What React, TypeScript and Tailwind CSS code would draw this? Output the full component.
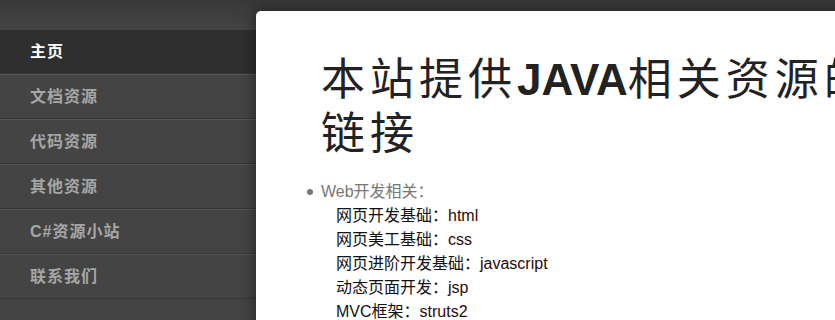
import React from "react";

const items = ["文档资源", "代码资源", "其他资源", "C#资源小站", "联系我们"];

const sub: [string, string][] = [
  ["网页开发基础：", "html"],
  ["网页美工基础：", "css"],
  ["网页进阶开发基础：", "javascript"],
  ["动态页面开发：", "jsp"],
  ["MVC框架：", "struts2"],
];

export default function App() {
  return (
    <div
      className="w-[835px] h-[320px] overflow-hidden flex bg-[#444444] bg-[linear-gradient(to_bottom,#383838_0px,#444444_30px)]"
      style={{ fontFamily: '"Liberation Sans", "Noto Sans CJK SC", sans-serif' }}
    >
      <nav className="w-[256px] shrink-0 pt-[30px] flex flex-col">
        <div className="h-[44px] bg-[#2f2f2f] border-b border-[#373737] flex items-center pl-[30px] text-white font-bold text-[16px] tracking-[1px]">
          主页
        </div>
        {items.map((t) => (
          <div
            key={t}
            className="h-[45px] border-t border-[#555555] border-b border-b-[#373737] flex items-center pl-[30px] text-[#a6a6a6] font-bold text-[16px] tracking-[1px]"
          >
            {t}
          </div>
        ))}
      </nav>
      <main className="flex-1 min-w-0 pt-[11px] relative">
        <div className="w-[760px] h-[400px] bg-white rounded-tl-[5px] shadow-[0_0_16px_rgba(0,0,0,0.55)] pl-[65px] pt-[40px]">
          <h1 className="w-[590px] text-[44px] leading-[51px] text-[#222222] font-normal">
            <span style={{ fontFamily: '"Noto Sans CJK SC", sans-serif' }} className="tracking-[5px]">
              本站提供
            </span>
            <span className="font-bold" style={{ fontFamily: '"Liberation Sans", sans-serif' }}>
              JAVA
            </span>
            <span style={{ fontFamily: '"Noto Sans CJK SC", sans-serif' }} className="tracking-[5px]">
              相关资源的链接
            </span>
          </h1>
          <ul className="mt-[21px] text-[16px] leading-[24px]">
            <li className="flex">
              <span className="w-[6px] h-[6px] rounded-full bg-[#777777] shrink-0 mt-[9px] ml-[-14px] mr-[8px]" />
              <div>
                <div className="text-[#777777]">Web开发相关：</div>
                {sub.map(([a, b]) => (
                  <div key={a} className="pl-[15px] text-[#111111]">
                    {a}
                    <span className="text-[#2a0a0a]">{b}</span>
                  </div>
                ))}
              </div>
            </li>
          </ul>
        </div>
      </main>
    </div>
  );
}
